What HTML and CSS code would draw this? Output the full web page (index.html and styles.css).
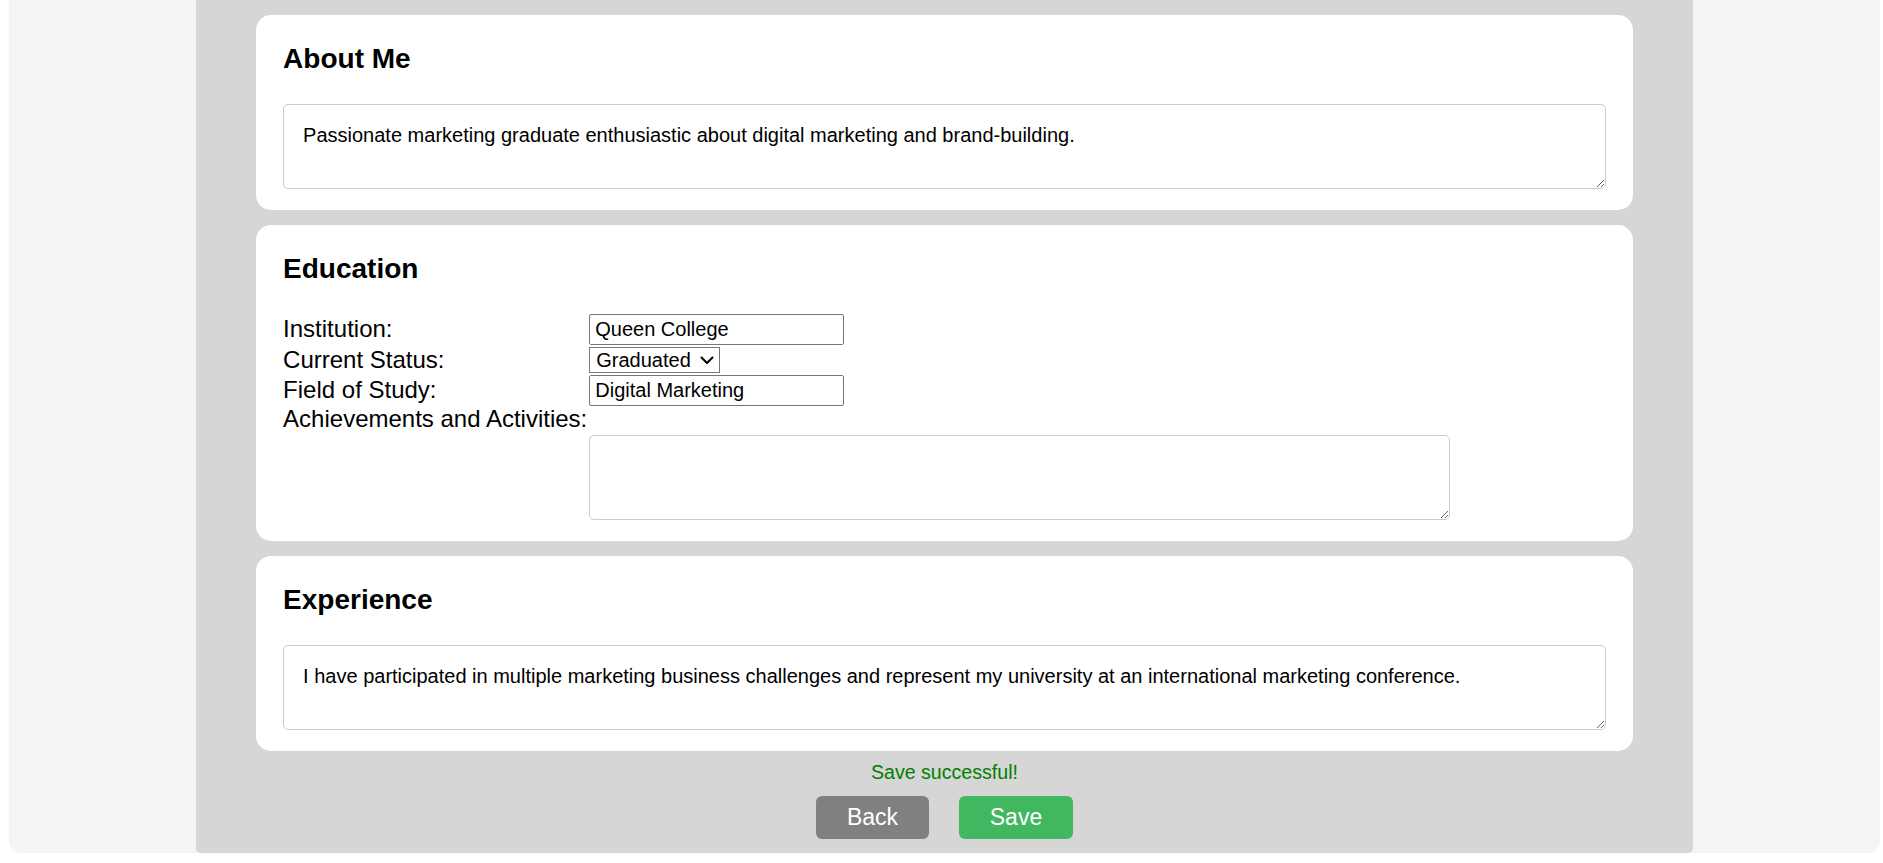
FILE: index.html
```html
<!DOCTYPE html>
<html lang="en">
<head>
<meta charset="utf-8">
<title>Profile</title>
<link rel="stylesheet" href="styles.css">
</head>
<body>
<div class="page">
  <div class="panel">
    <section class="card">
      <h2 class="card-title">About Me</h2>
      <textarea class="field-area">Passionate marketing graduate enthusiastic about digital marketing and brand-building.</textarea>
    </section>

    <section class="card">
      <h2 class="card-title">Education</h2>
      <div class="edu-grid">
        <label class="edu-label">Institution:</label>
        <input class="edu-input" type="text" value="Queen College">
        <label class="edu-label">Current Status:</label>
        <div class="edu-cell">
          <div class="select-wrap">
            <select class="edu-select"><option>Graduated</option><option>Studying</option></select>
            <svg class="select-chevron" width="14" height="9" viewBox="0 0 14 9" aria-hidden="true">
              <polyline points="1.5,1.5 7,7 12.5,1.5" fill="none" stroke="#000" stroke-width="2" stroke-linecap="round" stroke-linejoin="round"/>
            </svg>
          </div>
        </div>
        <label class="edu-label">Field of Study:</label>
        <input class="edu-input" type="text" value="Digital Marketing">
        <label class="edu-label">Achievements and Activities:</label>
        <span></span>
        <span></span>
        <textarea class="field-area edu-area"></textarea>
      </div>
    </section>

    <section class="card">
      <h2 class="card-title">Experience</h2>
      <textarea class="field-area">I have participated in multiple marketing business challenges and represent my university at an international marketing conference.</textarea>
    </section>

    <p class="message">Save successful!</p>
    <div class="actions">
      <button class="btn btn-back" type="button">Back</button>
      <button class="btn btn-save" type="button">Save</button>
    </div>
  </div>
</div>
</body>
</html>
```

FILE: styles.css
```css
html, body {
  background: #ffffff;
}

body {
  margin: 0 3px 0 9px;
  font-family: "Liberation Sans", Arial, sans-serif;
  color: #000000;
}

.page {
  background: #f4f4f4;
  border-radius: 0 0 12px 12px;
}

.panel {
  width: 80%;
  margin: 0 auto;
  box-sizing: border-box;
  background: #d6d6d6;
  border-radius: 0 0 5px 5px;
  padding: 15px 60px 14px;
}

.card {
  background: #ffffff;
  border-radius: 15px;
  padding: 28px 27px 21px;
  margin-bottom: 15px;
}

.card:last-of-type {
  margin-bottom: 0;
}

.card-title {
  margin: 0 0 29px;
  font-size: 28px;
  line-height: 32px;
  font-weight: bold;
}

.field-area {
  display: block;
  box-sizing: border-box;
  width: 100%;
  height: 85px;
  margin: 0;
  padding: 19px;
  border: 1px solid #cccccc;
  border-radius: 5px;
  font-family: "Liberation Sans", Arial, sans-serif;
  font-size: 20px;
  line-height: normal;
  color: #000000;
  background: #ffffff;
  resize: vertical;
}

.edu-grid {
  display: grid;
  grid-template-columns: max-content max-content;
  column-gap: 2px;
  align-items: center;
}

.edu-label {
  font-size: 24px;
  line-height: 26.5px;
}

.edu-input {
  box-sizing: border-box;
  width: 255px;
  height: 31.4px;
  margin: 0;
  padding: 3px 5px;
  border: 1px solid #767676;
  border-radius: 2px;
  font-family: "Liberation Sans", Arial, sans-serif;
  font-size: 20px;
  color: #000000;
  background: #ffffff;
}

.edu-cell {
  padding: 1.5px 0;
}

.select-wrap {
  position: relative;
  width: 131px;
}

.edu-select {
  display: block;
  box-sizing: border-box;
  width: 131px;
  height: 26.4px;
  margin: 0;
  padding: 0 26px 0 6px;
  border: 1px solid #767676;
  border-radius: 0;
  appearance: none;
  -webkit-appearance: none;
  font-family: "Liberation Sans", Arial, sans-serif;
  font-size: 20px;
  line-height: 24px;
  color: #000000;
  background-color: #ffffff;
}

.select-chevron {
  position: absolute;
  right: 6px;
  top: 9px;
  pointer-events: none;
}

.edu-area {
  width: 861px;
  margin-top: 2px;
}

.message {
  margin: 10px 0 0;
  text-align: center;
  color: #008000;
  font-size: 19.6px;
  line-height: 22.5px;
}

.actions {
  display: flex;
  justify-content: center;
  gap: 30px;
  margin-top: 12.5px;
}

.btn {
  height: 43px;
  padding: 0;
  border: none;
  border-radius: 6px;
  font-family: "Liberation Sans", Arial, sans-serif;
  font-size: 23px;
  color: #ffffff;
  cursor: pointer;
}

.btn-back {
  width: 113px;
  background: #808080;
}

.btn-save {
  width: 114px;
  background: #41b760;
}
```
